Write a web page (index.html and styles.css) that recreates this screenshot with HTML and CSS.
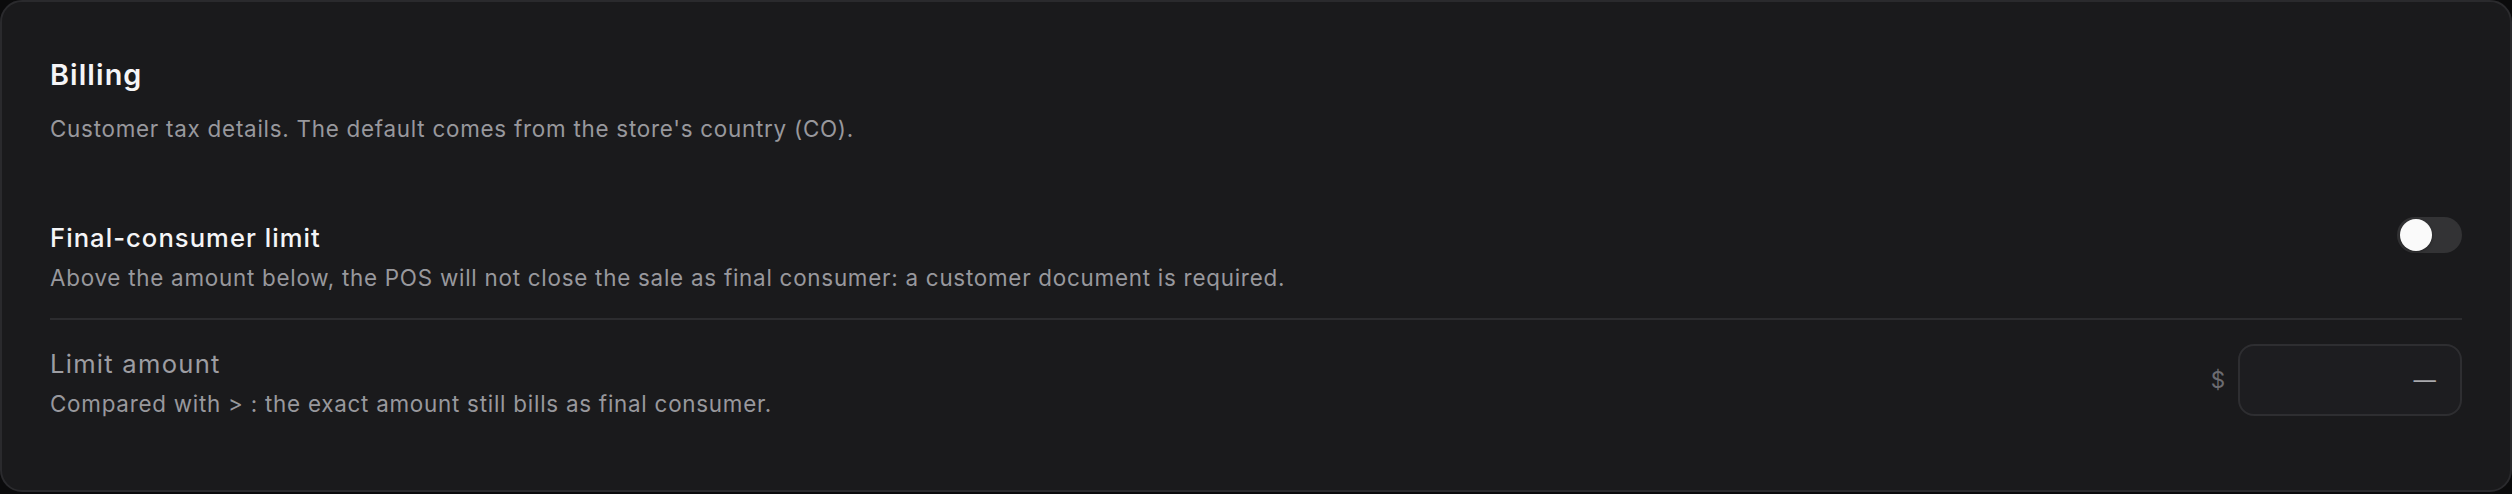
FILE: index.html
```html
<!DOCTYPE html>
<html lang="en">
<head>
<meta charset="utf-8">
<title>Billing</title>
<link rel="stylesheet" href="styles.css">
</head>
<body>
<section class="card">
  <header class="card-head">
    <h2 class="card-title">Billing</h2>
    <p class="card-desc">Customer tax details. The default comes from the store's country (CO).</p>
  </header>

  <div class="row row-first">
    <div class="row-text">
      <div class="row-title">Final-consumer limit</div>
      <div class="row-desc">Above the amount below, the POS will not close the sale as final consumer: a customer document is required.</div>
    </div>
    <div class="toggle" role="switch" aria-checked="false"><span class="knob"></span></div>
  </div>

  <div class="row row-disabled">
    <div class="row-text">
      <div class="row-title">Limit amount</div>
      <div class="row-desc">Compared with &gt; : the exact amount still bills as final consumer.</div>
    </div>
    <div class="amount">
      <span class="currency">$</span>
      <div class="amount-input"><span class="placeholder">—</span></div>
    </div>
  </div>
</section>
</body>
</html>
```

FILE: styles.css
```css
* { box-sizing: border-box; }
html, body {
  margin: 0;
  padding: 0;
  background: #0b0b0c;
}
body {
  font-family: Inter, "Noto Sans", "Liberation Sans", sans-serif;
  width: 2512px;
  height: 494px;
}
.card {
  height: 492px;
  background: #1a1a1c;
  border: 2px solid #2a2a2d;
  border-radius: 22px;
  padding: 54.5px 48px 0 48px;
}
.card-title {
  margin: 0;
  font-size: 28.8px;
  line-height: 36px;
  font-weight: 600;
  color: #f5f5f7;
  letter-spacing: 1.1px;
}
.card-desc {
  margin: 20.4px 0 0;
  font-size: 22.4px;
  line-height: 32px;
  color: #98989d;
  letter-spacing: 0.75px;
}
.row {
  display: flex;
  align-items: flex-start;
  justify-content: space-between;
  gap: 32px;
}
.row-first {
  margin-top: 74.8px;
  padding-bottom: 24px;
  border-bottom: 2px solid #2c2c2f;
}
.row-disabled {
  padding-top: 25.7px;
}
.row-title {
  font-size: 25.6px;
  line-height: 36px;
  font-weight: 500;
  color: #f5f5f7;
  letter-spacing: 1.05px;
}
.row-desc {
  margin-top: 6.2px;
  font-size: 22.4px;
  line-height: 32px;
  color: #98989d;
  letter-spacing: 0.75px;
}
.row-disabled .row-title {
  color: #9d9da2;
  font-weight: 400;
  letter-spacing: 1.25px;
}
.toggle {
  flex: none;
  width: 65px;
  height: 36px;
  margin-top: -2.5px;
  border-radius: 18px;
  background: #333335;
  padding: 2px 3px;
}
.knob {
  display: block;
  width: 32px;
  height: 32px;
  border-radius: 50%;
  background: #fafafa;
  box-shadow: 0 1px 3px rgba(0,0,0,0.35);
}
.amount {
  flex: none;
  display: flex;
  align-items: center;
  gap: 13px;
  margin-top: -1.7px;
}
.currency {
  font-size: 22.4px;
  line-height: 32px;
  color: #6c6c71;
}
.amount-input {
  width: 224px;
  height: 72px;
  border: 2px solid #2e2e31;
  border-radius: 16px;
  background: #1d1d20;
  display: flex;
  align-items: center;
  justify-content: flex-end;
  padding: 0 24px;
}
.placeholder {
  font-size: 22.4px;
  line-height: 32px;
  color: #a9a9ad;
}
```
